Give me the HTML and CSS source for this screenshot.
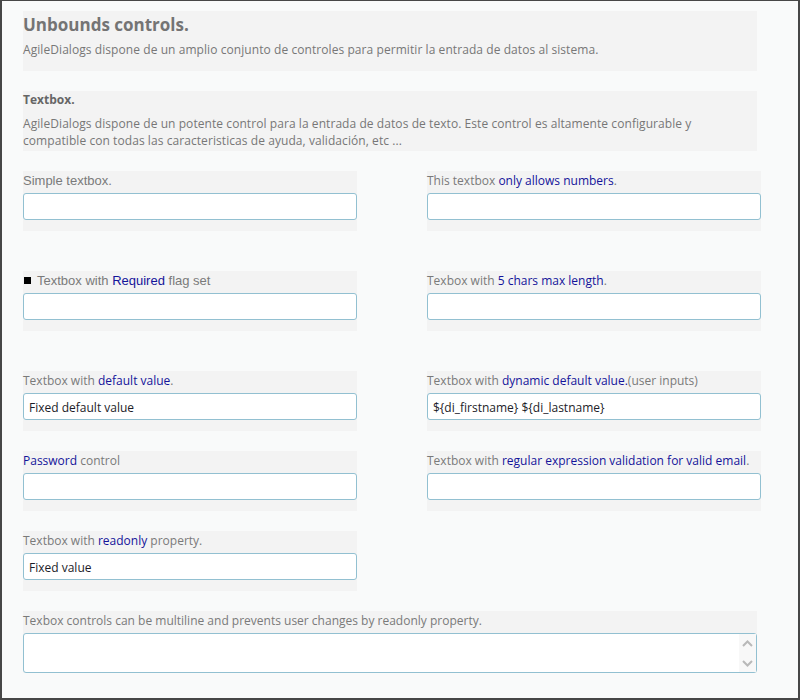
FILE: index.html
```html
<!DOCTYPE html>
<html lang="es">
<head>
<meta charset="utf-8">
<title>Unbounds controls</title>
<link rel="stylesheet" href="styles.css">
</head>
<body>
<div class="window">
  <div class="content">
    <section class="panel intro">
      <h1 class="title">Unbounds controls.</h1>
      <p class="desc">AgileDialogs dispone de un amplio conjunto de controles para permitir la entrada de datos al sistema.</p>
    </section>
    <section class="panel intro2">
      <h2 class="subtitle">Textbox.</h2>
      <p class="desc">AgileDialogs dispone de un potente control para la entrada de datos de texto. Este control es altamente configurable y<br>compatible con todas las caracteristicas de ayuda, validación, etc ...</p>
    </section>
    <div class="fields">
      <div class="field spaced">
        <label class="label arial">Simple textbox.</label>
        <input class="textbox" type="text">
      </div>
      <div class="field spaced">
        <label class="label">This textbox <span class="hl">only allows numbers</span>.</label>
        <input class="textbox" type="text">
      </div>
      <div class="field spaced">
        <label class="label arial"><span class="req-mark"></span>Textbox with <span class="hl">Required</span> flag set</label>
        <input class="textbox" type="text">
      </div>
      <div class="field spaced">
        <label class="label">Texbox with <span class="hl">5 chars max length</span>.</label>
        <input class="textbox" type="text" maxlength="5">
      </div>
      <div class="field">
        <label class="label">Textbox with <span class="hl">default value</span>.</label>
        <input class="textbox" type="text" value="Fixed default value">
      </div>
      <div class="field">
        <label class="label">Textbox with <span class="hl">dynamic default value.</span>(user inputs)</label>
        <input class="textbox" type="text" value="${di_firstname} ${di_lastname}">
      </div>
      <div class="field">
        <label class="label"><span class="hl">Password</span> control</label>
        <input class="textbox" type="password">
      </div>
      <div class="field">
        <label class="label">Textbox with <span class="hl">regular expression validation for valid email</span>.</label>
        <input class="textbox" type="text">
      </div>
      <div class="field">
        <label class="label">Textbox with <span class="hl">readonly</span> property.</label>
        <input class="textbox" type="text" value="Fixed value" readonly>
      </div>
    </div>
    <div class="field wide">
      <label class="label">Texbox controls can be multiline and prevents user changes by readonly property.</label>
      <div class="memo">
        <textarea class="memo-text" readonly></textarea>
        <div class="memo-scroll">
          <svg width="11" height="7" viewBox="0 0 11 7"><path d="M1 6 L5.5 1.5 L10 6" fill="none" stroke="#b9b9b9" stroke-width="2"/></svg>
          <svg width="11" height="7" viewBox="0 0 11 7"><path d="M1 1 L5.5 5.5 L10 1" fill="none" stroke="#b9b9b9" stroke-width="2"/></svg>
        </div>
      </div>
    </div>
  </div>
</div>
</body>
</html>
```
FILE: styles.css
```css
html, body {
  margin: 0;
  padding: 0;
  background: #f9fafa;
}

.window {
  width: 800px;
  height: 700px;
  box-sizing: border-box;
  border: 2px solid #474747;
  border-top-width: 1px;
  background: #f9fafa;
  padding: 10px 0 0 21px;
  font-family: "Open Sans", "Noto Sans", sans-serif;
  color: #777;
}

.content {
  width: 734px;
  display: flex;
  flex-direction: column;
  gap: 20px;
}

.panel {
  background: #f3f3f3;
  box-sizing: border-box;
  height: 60px;
}

.intro {
  padding-top: 2px;
}

.title {
  margin: 0;
  font-size: 17px;
  line-height: 24px;
  font-weight: 700;
  color: #747474;
}

.subtitle {
  margin: 0;
  font-size: 12px;
  line-height: 17px;
  font-weight: 700;
  color: #666;
}

.desc {
  margin: 4px 0 0;
  font-size: 12px;
  line-height: 17px;
  letter-spacing: 0.07px;
  color: #777;
}

.intro2 .desc {
  margin-top: 7px;
}

.fields {
  display: grid;
  grid-template-columns: 334px 334px;
  column-gap: 70px;
  row-gap: 20px;
  width: 738px;
}

.field {
  background: #f3f3f3;
  height: 60px;
  box-sizing: border-box;
  display: flex;
  flex-direction: column;
}

.field.spaced {
  margin-bottom: 20px;
}

.field.wide {
  height: auto;
}

.label {
  display: block;
  height: 22px;
  line-height: 19px;
  font-size: 12px;
  color: #7a7a7a;
  white-space: nowrap;
}

.label.arial {
  font-family: "Liberation Sans", Arial, sans-serif;
  font-size: 13px;
}

.req-mark {
  display: inline-block;
  width: 7px;
  height: 7px;
  background: #000;
  margin: 0 6px 0 1px;
  vertical-align: 1px;
}

.hl {
  color: #14149a;
}

.textbox {
  display: block;
  width: 100%;
  height: 27px;
  box-sizing: border-box;
  margin: 0;
  border: 1px solid #92c0d1;
  border-radius: 3px;
  background: #fff;
  padding: 1px 5px 0;
  font-family: "Open Sans", "Noto Sans", sans-serif;
  font-size: 12px;
  color: #1c1c28;
  outline: none;
}

.memo {
  display: flex;
  height: 40px;
  box-sizing: border-box;
  border: 1px solid #92c0d1;
  border-radius: 3px;
  background: #fff;
}

.memo-text {
  flex: 1;
  border: none;
  resize: none;
  background: transparent;
  margin: 0;
  padding: 3px 5px;
  font-family: "Open Sans", "Noto Sans", sans-serif;
  font-size: 12px;
  outline: none;
}

.memo-scroll {
  width: 17px;
  background: #f8f8f8;
  display: flex;
  flex-direction: column;
  justify-content: space-between;
  align-items: center;
  padding: 6px 0 5px;
  box-sizing: border-box;
}

.memo-scroll svg {
  display: block;
}
```
